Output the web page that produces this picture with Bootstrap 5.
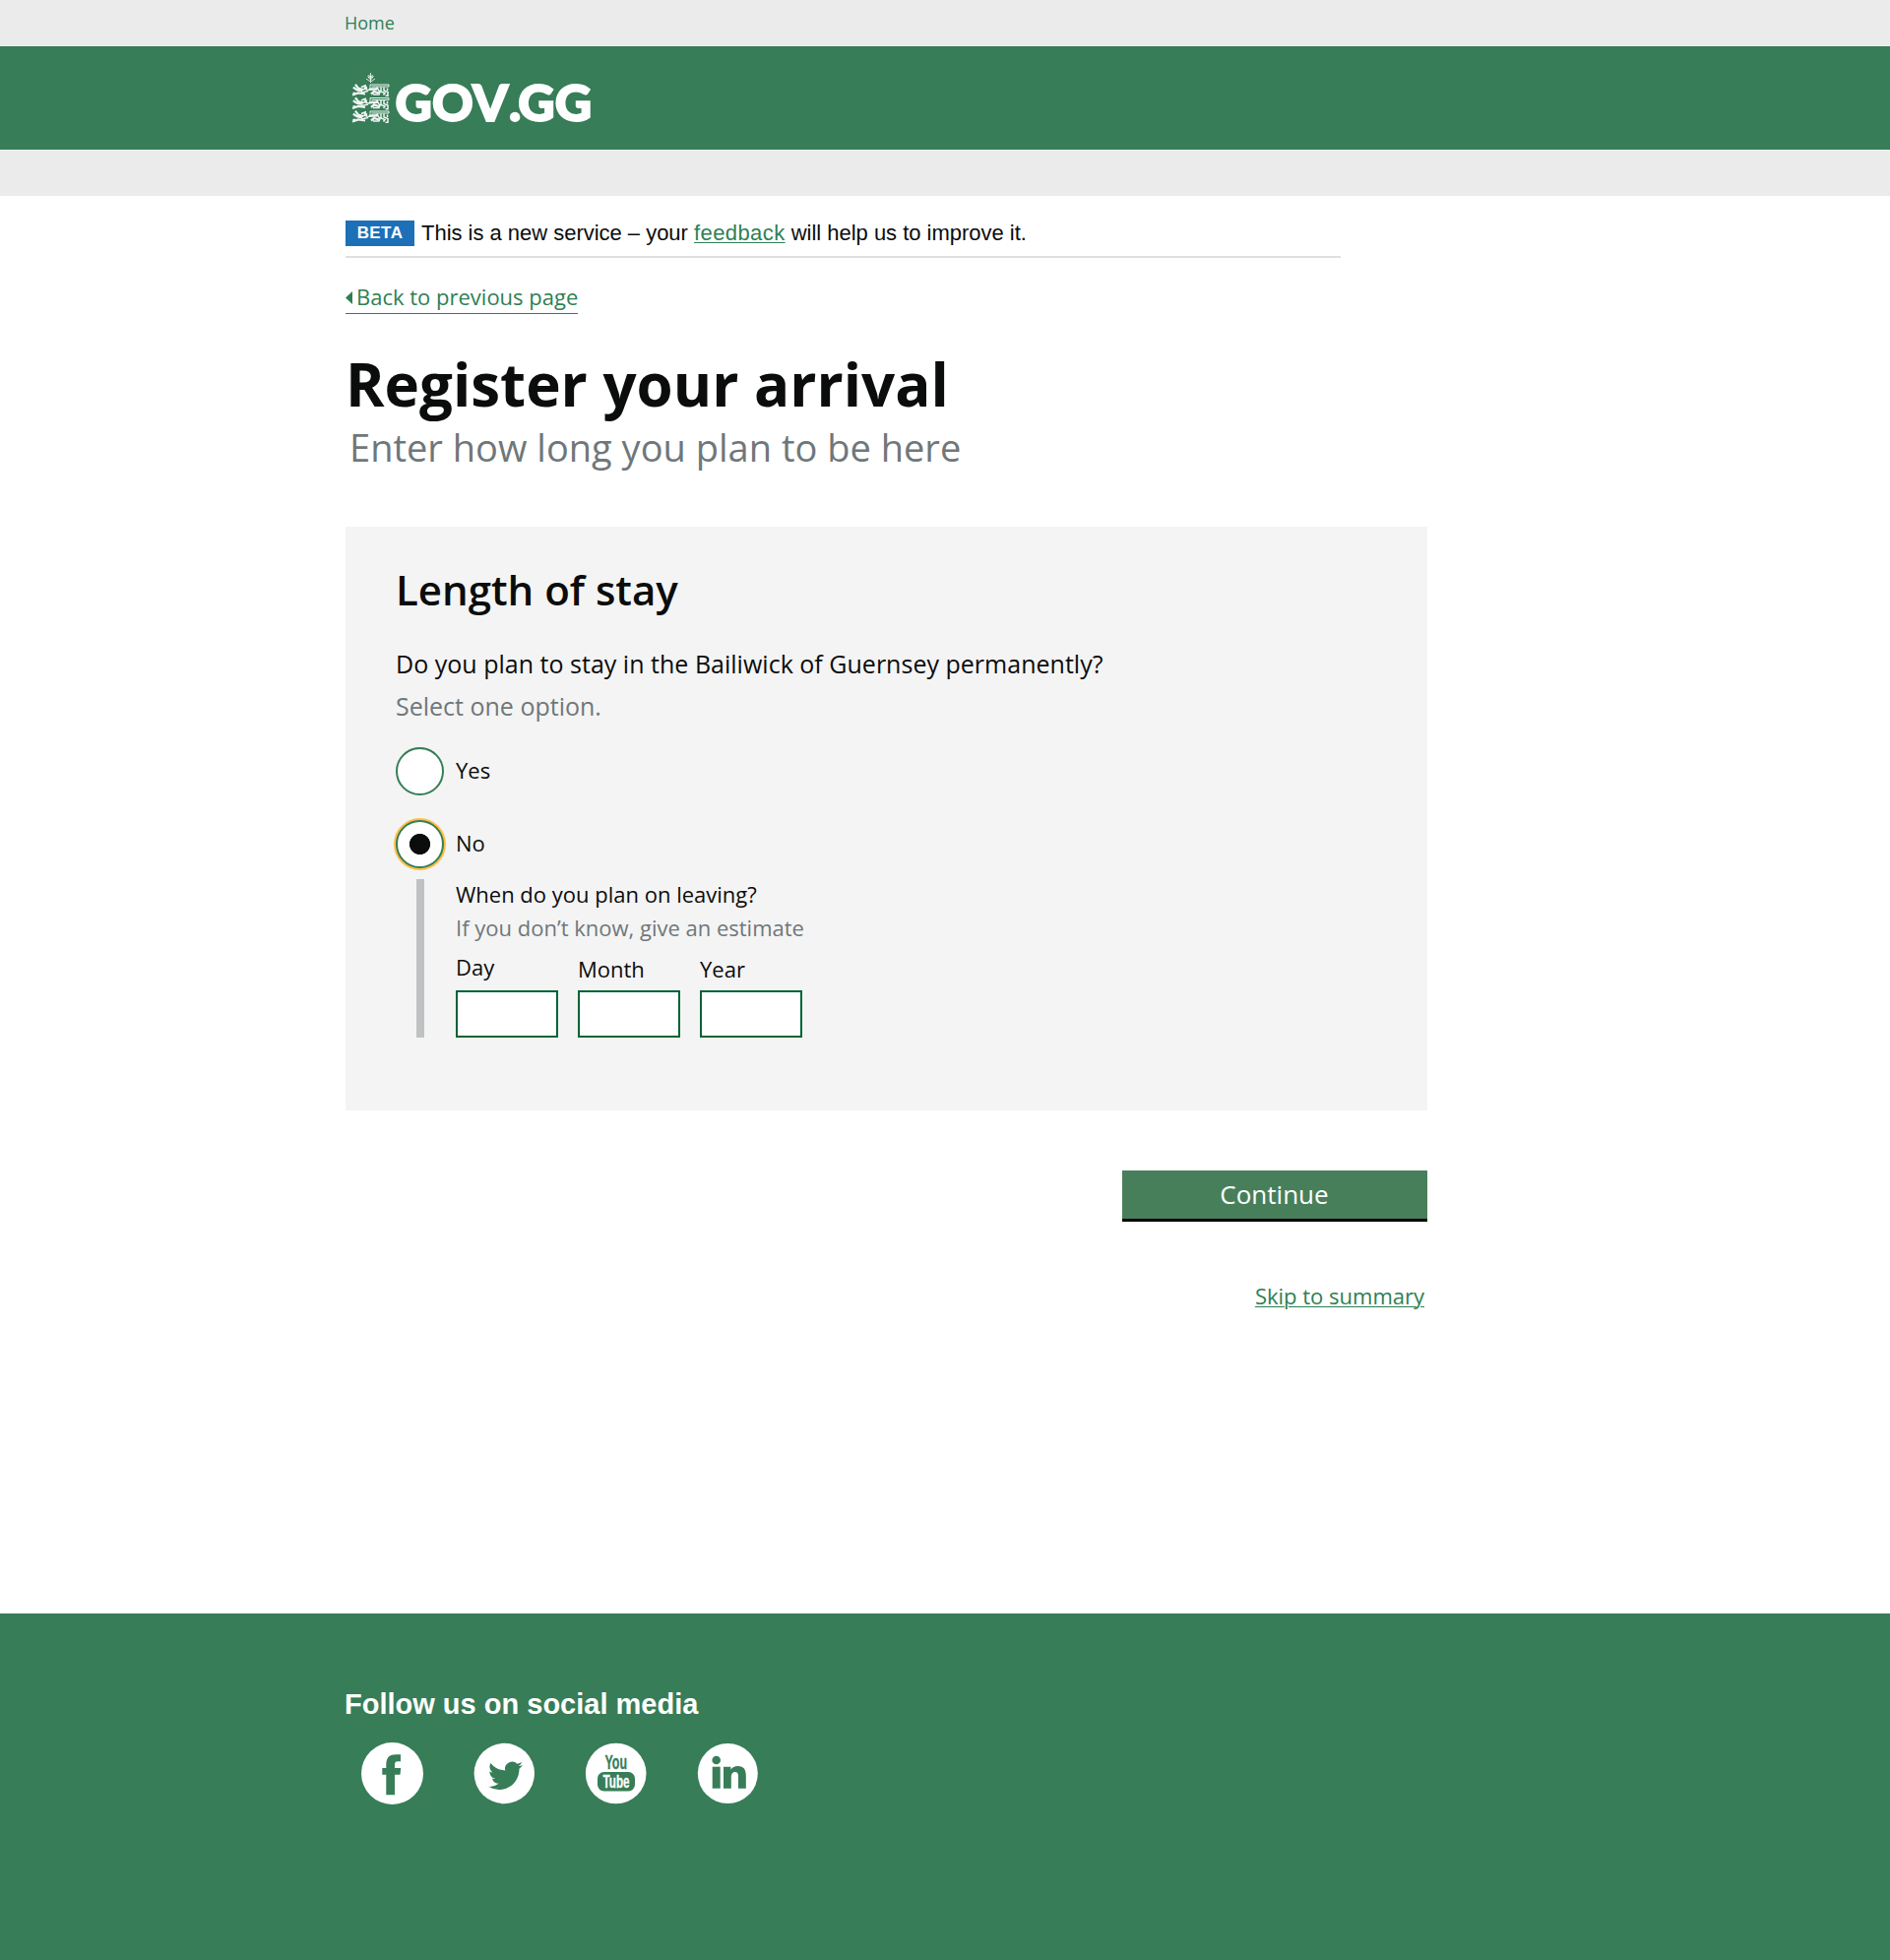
<!DOCTYPE html>
<html lang="en">
<head>
<meta charset="utf-8">
<meta name="viewport" content="width=device-width, initial-scale=1">
<title>Register your arrival - GOV.GG</title>
<link href="https://cdn.jsdelivr.net/npm/bootstrap@5.3.0/dist/css/bootstrap.min.css" rel="stylesheet">
<style>
  :root { --gg-green: #377d57; --gg-ink: #0b0c0c; --gg-hint: #6f777b; }
  body { font-family: "Open Sans", sans-serif; color: var(--gg-ink); background: #fff; min-height: 1991px; }
  a, a:hover { color: #2e8054; }
  .page-col { width: 1099px; margin-left: 351px; }
  .top-strip { height: 47px; background: #ebebeb; }
  .top-strip a { font-size: 18px; line-height: 46px; margin-left: -1px; }
  .brand-bar { height: 105px; background: var(--gg-green); }
  .beta-row { height: 38px; width: 1011px; margin-top: 25px; border-bottom: 2px solid #dee0e2; font-family: "Liberation Sans", sans-serif; font-size: 22px; line-height: 25px; letter-spacing: -.02px; padding-bottom: 10px; }
  .beta-row a { letter-spacing: .42px; text-underline-offset: 2px; text-decoration-thickness: 1px; }
  .beta-text { padding-left: 7px; }
  .beta-tag { width: 70px; height: 26px; background: #1d70b8; font-size: 17px; letter-spacing: .4px; }
  .back-link { margin-top: 24px; font-size: 22px; line-height: 31px; padding-bottom: 1px; border-bottom: 1px solid #2e8054; }
  .back-link svg { margin: 1px 4px 0 0; }
  .page-title { margin-top: 33px; font-size: 60px; line-height: 76px; font-weight: 700; }
  .page-sub { font-size: 38px; line-height: 52px; color: var(--gg-hint); padding-left: 4px; letter-spacing: .01px; }
  .stay-panel { margin-top: 55px; height: 593px; padding: 36px 51px 0; background: #f4f4f4; }
  .stay-panel h2 { font-size: 42px; line-height: 56px; font-weight: 600; margin: 0; }
  .question { font-size: 25px; line-height: 40px; margin: 27px 0 3px; letter-spacing: .015px; }
  .hint { color: var(--gg-hint); }
  .select-hint { font-size: 25px; line-height: 40px; margin-bottom: 22px; }
  .choice { height: 49px; gap: 12px; font-size: 22px; }
  .choice + .choice { margin-top: 25px; }
  .choice label { padding-bottom: 2px; }
  .choice .form-check-input { width: 49px; height: 49px; margin: 0; border: 2px solid var(--gg-green); background-color: #fff; }
  .choice .form-check-input:checked { background-image: radial-gradient(circle, #0b0c0c 10.2px, transparent 10.9px); background-size: 45px 45px; box-shadow: 0 0 0 2px #ffbf47; }
  .leaving { margin: 11px 0 0 21px; height: 161px; border-left: 8px solid #bfc1c3; padding-left: 32px; font-size: 22px; }
  .leave-q { line-height: 31px; }
  .leave-hint { line-height: 37px; }
  .leaving .date-input { width: 104px; height: 48px; border: 2px solid #006435; border-radius: 0; background: #fff; }
  .date-row { gap: 20px; height: 93px; }
  .date-row label { line-height: 30px; margin-bottom: 7px; }
  .date-row .day-label { margin-bottom: 9px; }
  .btn-continue, .btn-continue:hover { width: 310px; height: 52px; margin-top: 61px; padding: 0 1px 0 0; border: 0; border-bottom: 3px solid #000; border-radius: 0; background: #487f5b; color: #fff; font-size: 26px; line-height: 47px; }
  .skip-link { font-size: 22px; line-height: 30px; margin: 60px 3px 0 0; text-underline-offset: 2px; text-decoration-thickness: 1px; }
  .site-footer { height: 352px; margin-top: 308px; padding-top: 72px; background: var(--gg-green); color: #fff; }
  .site-footer h2 { font: 700 29px/40px "Liberation Sans", sans-serif; margin: 0 0 0 -1px; }
  .socials { gap: 48px; padding-left: 15px; margin-top: 18px; }
  .socials a { line-height: 0; }
</style>
<script src="https://cdn.jsdelivr.net/npm/bootstrap@5.3.0/dist/js/bootstrap.bundle.min.js"></script>
</head>
<body>
<nav class="top-strip"><div class="page-col"><a class="d-inline-block text-decoration-none" href="#">Home</a></div></nav>
<header class="brand-bar">
  <div class="page-col">
    <svg class="d-block" width="260" height="105" viewBox="351 47 260 105" role="img" aria-label="GOV.GG">
      <defs>
        <g id="lion" fill="none" stroke="#fff">
          <path stroke-width="2.200" d="M3 .8 6 4.600 11 6M.8 3.800 5 6.500 10 7.500M0 11.500 6 9.500 13 10.500M3 9.500.5 10"/>
          <path stroke-width="1.600" d="M9 3.500 14 1.500M10 6 15 4.500M9 9 16 7.500M16 6.500 20 5.500M11 2.500 15 4M12 4.500 15.500 6.500"/>
          <path stroke-width="1" d="M18 3.800V1H37V3H19.500"/>
          <path stroke-width="2.300" d="M17 5.500H24L26 4M19 10.500 22 8 27 9.500"/>
          <path stroke-width="1.500" d="M25 4.500 28 8.500 27 11H21M29 3.500V8L33 9.500 31.500 11.500M32 3.500V7L36 8.500V12.300H33.500M35.500 4.500V7"/>
        </g>
      </defs>
      <path d="M376.500 74V84M373.500 77 376.500 81 379.500 77M372 80 376.500 83 381 80M374 76.500 379 79M379 76.500 374 79" stroke="#fff" stroke-width="1" fill="none" opacity=".8"/>
      <g opacity=".93">
        <use href="#lion" x="358" y="85"/>
        <use href="#lion" x="358" y="98.500"/>
        <use href="#lion" x="358" y="112"/>
      </g>
      <text y="122.800" x="401.500 439 480 517 526.200 563.700" font-family="Lato, sans-serif" font-weight="900" font-size="51.500" fill="#fff" stroke="#fff" stroke-width="2">GOV.GG</text>
    </svg>
  </div>
</header>
<div class="top-strip"></div>

<main class="page-col d-flex flex-column align-items-start">
  <div class="beta-row d-flex">
    <span class="beta-tag text-white fw-bold text-center">BETA</span>
    <span class="beta-text text-nowrap">This is a new service – your <a href="#">feedback</a> will help us to improve it.</span>
  </div>
  <a class="back-link d-inline-flex align-items-center text-decoration-none" href="#">
    <svg width="7" height="13" viewBox="0 0 7 13"><path d="M7 0V13L0 6.500Z" fill="#2e8054"/></svg><span>Back to previous page</span>
  </a>
  <h1 class="page-title mb-0">Register your arrival</h1>
  <p class="page-sub mb-0">Enter how long you plan to be here</p>

  <section class="stay-panel w-100">
    <h2>Length of stay</h2>
    <p class="question">Do you plan to stay in the Bailiwick of Guernsey permanently?</p>
    <p class="hint select-hint">Select one option.</p>
    <div class="choice d-flex align-items-center">
      <input class="form-check-input" type="radio" name="stay" id="stay-yes"><label for="stay-yes">Yes</label>
    </div>
    <div class="choice d-flex align-items-center">
      <input class="form-check-input" type="radio" name="stay" id="stay-no" checked><label for="stay-no">No</label>
    </div>
    <div class="leaving">
      <div class="leave-q">When do you plan on leaving?</div>
      <div class="leave-hint hint">If you don’t know, give an estimate</div>
      <div class="date-row d-flex align-items-end">
        <div class="d-flex flex-column"><label class="day-label" for="d">Day</label><input class="date-input" id="d"></div>
        <div class="d-flex flex-column"><label for="m">Month</label><input class="date-input" id="m"></div>
        <div class="d-flex flex-column"><label for="y">Year</label><input class="date-input" id="y"></div>
      </div>
    </div>
  </section>

  <button class="btn btn-continue align-self-end" type="button">Continue</button>
  <a class="skip-link align-self-end" href="#">Skip to summary</a>
</main>

<footer class="site-footer">
  <div class="page-col">
    <h2>Follow us on social media</h2>
    <div class="socials d-flex">
      <a href="#" aria-label="Facebook"><svg width="66" height="66"><circle cx="32.500" cy="32.500" r="31.500" fill="#fff"/><path fill="#377d57" d="M26.300 54.300V33.700H22.300V27H26.300V24C26.300 16 30 13.300 36 13.300H41V20.300H38C35.500 20.300 35 21.500 35 24V27H41.200L40.500 33.700H35V54.300Z"/></svg></a>
      <a href="#" aria-label="Twitter"><svg width="66" height="66"><circle cx="32.300" cy="32.500" r="30.700" fill="#fff"/><path transform="translate(16 16.200) scale(2.190)" fill="#377d57" d="M5.026 15c6.038 0 9.341-5.003 9.341-9.334 0-.14 0-.282-.006-.422A6.685 6.685 0 0 0 16 3.542a6.658 6.658 0 0 1-1.889.518 3.301 3.301 0 0 0 1.447-1.817 6.533 6.533 0 0 1-2.087.793A3.286 3.286 0 0 0 7.875 6.030a9.325 9.325 0 0 1-6.767-3.429 3.289 3.289 0 0 0 1.018 4.382A3.323 3.323 0 0 1 .64 6.575v.045a3.288 3.288 0 0 0 2.632 3.218 3.203 3.203 0 0 1-.865.115 3.230 3.230 0 0 1-.614-.057 3.283 3.283 0 0 0 3.067 2.277A6.588 6.588 0 0 1 .78 13.580a6.320 6.320 0 0 1-.78-.045A9.344 9.344 0 0 0 5.026 15z"/></svg></a>
      <a href="#" aria-label="YouTube"><svg width="66" height="66" font-family="Liberation Sans, sans-serif" font-weight="700"><circle cx="31.700" cy="32.500" r="30.800" fill="#fff"/><text x="20.500" y="27.500" font-size="20.500" textLength="22.500" lengthAdjust="spacingAndGlyphs" fill="#377d57" stroke="#377d57" stroke-width=".3">You</text><rect x="13" y="31" width="38" height="19.500" rx="6.500" fill="#377d57"/><text x="18.500" y="46.700" font-size="18" textLength="27" lengthAdjust="spacingAndGlyphs" fill="#fff" stroke="#fff" stroke-width=".3">Tube</text></svg></a>
      <a href="#" aria-label="LinkedIn"><svg width="66" height="66"><circle cx="31.300" cy="32.500" r="30.500" fill="#fff"/><g fill="#377d57"><circle cx="19.700" cy="19" r="4.300"/><rect x="15.700" y="25.700" width="8" height="22"/><path d="M27 25.700h7.400v3c1.400-2.400 4-3.600 7.200-3.600 6 0 8.200 3.600 8.200 9.600v13h-7.800v-12c0-3-.8-4.600-3.200-4.600s-4 1.600-4 4.800v11.800h-7.800z"/></g></svg></a>
    </div>
  </div>
</footer>
</body>
</html>
